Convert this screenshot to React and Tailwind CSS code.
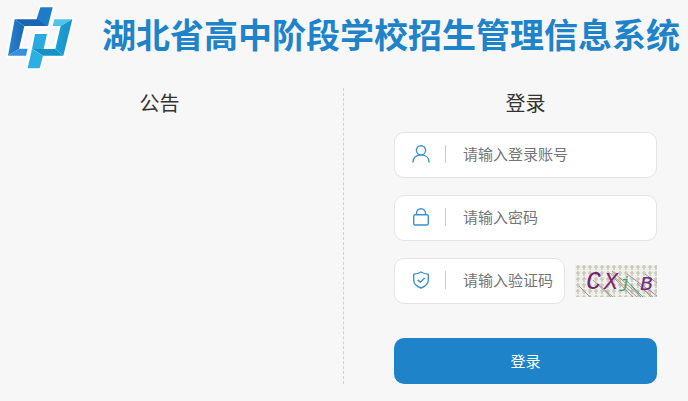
const Logo = () => (
  <svg viewBox="0 0 228 216" className="w-[76px] h-[72px] shrink-0" aria-hidden="true">
    <defs>
      <linearGradient id="dark" x1="0" y1="0" x2="1" y2="0">
        <stop offset="0" stopColor="#2a82cf" />
        <stop offset="1" stopColor="#1b68b3" />
      </linearGradient>
      <linearGradient id="light" x1="0" y1="0" x2="1" y2="0">
        <stop offset="0" stopColor="#1aa3d6" />
        <stop offset="1" stopColor="#1b8fc6" />
      </linearGradient>
    </defs>
    <g fill="#fff" stroke="#fff" strokeWidth="13" strokeLinejoin="round">
      <path d="M44 58H111L121 22H158L144 78H73L57 146H83L78 167H24Z" />
      <path d="M163 58H217L190 167H129L119 205H83L105 102H141L131 147H166L182 78H158Z" />
    </g>
    <path d="M121 22H158L144 78L109 60Z" fill="#1d7bc8" />
    <path d="M44 58H111L144 78H73Z" fill="#1a65b0" />
    <path d="M44 58L73 78L57 146L24 167Z" fill="url(#dark)" />
    <path d="M24 167L57 146H83L78 167Z" fill="#3591dd" />
    <path d="M163 58H217L182 78H158Z" fill="#4fc4ea" />
    <path d="M217 58L190 167L166 147L182 78Z" fill="url(#light)" />
    <path d="M97 147H166L190 167H129Z" fill="#1592c4" />
    <path d="M105 102H141L131 147H96Z" fill="#2aabdf" />
    <path d="M96 147L129 167L119 205H83Z" fill="#2bb0e3" />
  </svg>
);

const UserIcon = () => (
  <svg viewBox="0 0 18 18" className="w-[18px] h-[18px]" fill="none" stroke="#3c91cf" strokeWidth="1.4" strokeLinecap="round">
    <circle cx="9" cy="5.3" r="4.6" />
    <path d="M1 17C1 12.500 4.500 9.900 9 9.900S17 12.500 17 17" />
  </svg>
);

const LockIcon = () => (
  <svg viewBox="0 0 18 18" className="w-[18px] h-[18px]" fill="none" stroke="#3c91cf" strokeWidth="1.4">
    <rect x="1.700" y="6.700" width="14.600" height="10.300" rx="1.500" />
    <path d="M4.500 6.700V5.200A4.500 4.500 0 0 1 13.500 5.200V6.700" />
  </svg>
);

const ShieldIcon = () => (
  <svg viewBox="0 0 18 18" className="w-[18px] h-[18px]" fill="none" stroke="#3c91cf" strokeWidth="1.4" strokeLinejoin="round">
    <path d="M9 1C11 2.300 13.500 3 16.300 3.100V9.500C16 13 13 15.600 9 17C5 15.600 2 13 1.700 9.500V3.100C4.500 3 7 2.300 9 1Z" />
    <path d="M5.600 8.800L8.300 11.300L12.700 6.900" />
  </svg>
);

const Captcha = () => (
  <svg viewBox="0 0 82 32" className="w-[82px] h-8 block" role="img" aria-label="CXjB">
    <defs>
      <pattern id="grain" width="6" height="6" patternUnits="userSpaceOnUse">
        <rect width="6" height="6" fill="#f0f0ea" />
        <path d="M3 0V5M1 2H5" stroke="#cacabf" strokeWidth="1.6" />
      </pattern>
    </defs>
    <rect width="82" height="32" fill="url(#grain)" />
    <g fill="none" strokeWidth="1">
      <path d="M4 21L15 32M18 15L36 32M22 18L38 32M35 8L62 32M37 6L66 32M40 14L58 32M66 22L78 32M62 18L76 32" stroke="#a59a86" />
      <path d="M52 9L82 31M70 9L82 18" stroke="#a982ad" />
      <path d="M52 16L66 32M56 20L68 32" stroke="#64a58c" />
    </g>
    <g fontFamily="Liberation Mono, monospace" fontStyle="italic">
      <text x="11" y="24" fontSize="25" fill="#74246f">C</text>
      <text x="29" y="24" fontSize="23" fill="#82266d">X</text>
      <text x="45" y="23" fontSize="16" fill="#43a06b">j</text>
      <text x="65" y="25" fontSize="21" fill="#6d2b80">B</text>
    </g>
  </svg>
);

const Field = ({ id, label, type = 'text', icon: Icon }) => (
  <div className="flex-1 min-w-0 h-[46px] flex items-center bg-white border border-[#e4e4e4] rounded-[10px] pl-[17px] pr-1 pb-[2px]">
    <label htmlFor={id} aria-label={label} className="shrink-0 pr-[15px] mr-[17px] border-r border-[#cccccc]">
      <Icon />
    </label>
    <input
      id={id}
      type={type}
      placeholder={label}
      className="flex-1 min-w-0 bg-transparent text-[15px] text-[#333333] placeholder:text-[#757575] outline-none"
    />
  </div>
);

const App = () => {
  return (
    <div className="min-h-screen bg-[#f7f7f7] font-['Noto_Sans_CJK_SC',sans-serif] text-[#333333]">
      <header className="flex items-start gap-[26px]">
        <Logo />
        <h1 className="text-[34px] leading-[68px] font-bold text-[#1e83c8] whitespace-nowrap">湖北省高中阶段学校招生管理信息系统</h1>
      </header>

      <main className="grid grid-cols-2 pt-4">
        <section className="pr-6 border-r border-dashed border-[#bcd8ec]">
          <h2 className="text-xl leading-[30px] text-center">公告</h2>
        </section>

        <section className="pl-[50px] pr-[31px]">
          <h2 className="text-xl leading-[30px] text-center">登录</h2>
          <form className="pt-[14px]" onSubmit={(e) => e.preventDefault()}>
            <div className="flex flex-col gap-[17px]">
              <div className="flex">
                <Field id="account" label="请输入登录账号" icon={UserIcon} />
              </div>
              <div className="flex">
                <Field id="password" label="请输入密码" type="password" icon={LockIcon} />
              </div>
              <div className="flex items-center gap-[10px]">
                <Field id="captcha" label="请输入验证码" icon={ShieldIcon} />
                <button type="button" className="shrink-0">
                  <Captcha />
                </button>
              </div>
            </div>
            <button type="submit" className="mt-[34px] w-full h-[46px] rounded-[10px] bg-[#1e83c8] text-[15px] text-white">
              登录
            </button>
          </form>
        </section>
      </main>
    </div>
  );
};

export default App;
